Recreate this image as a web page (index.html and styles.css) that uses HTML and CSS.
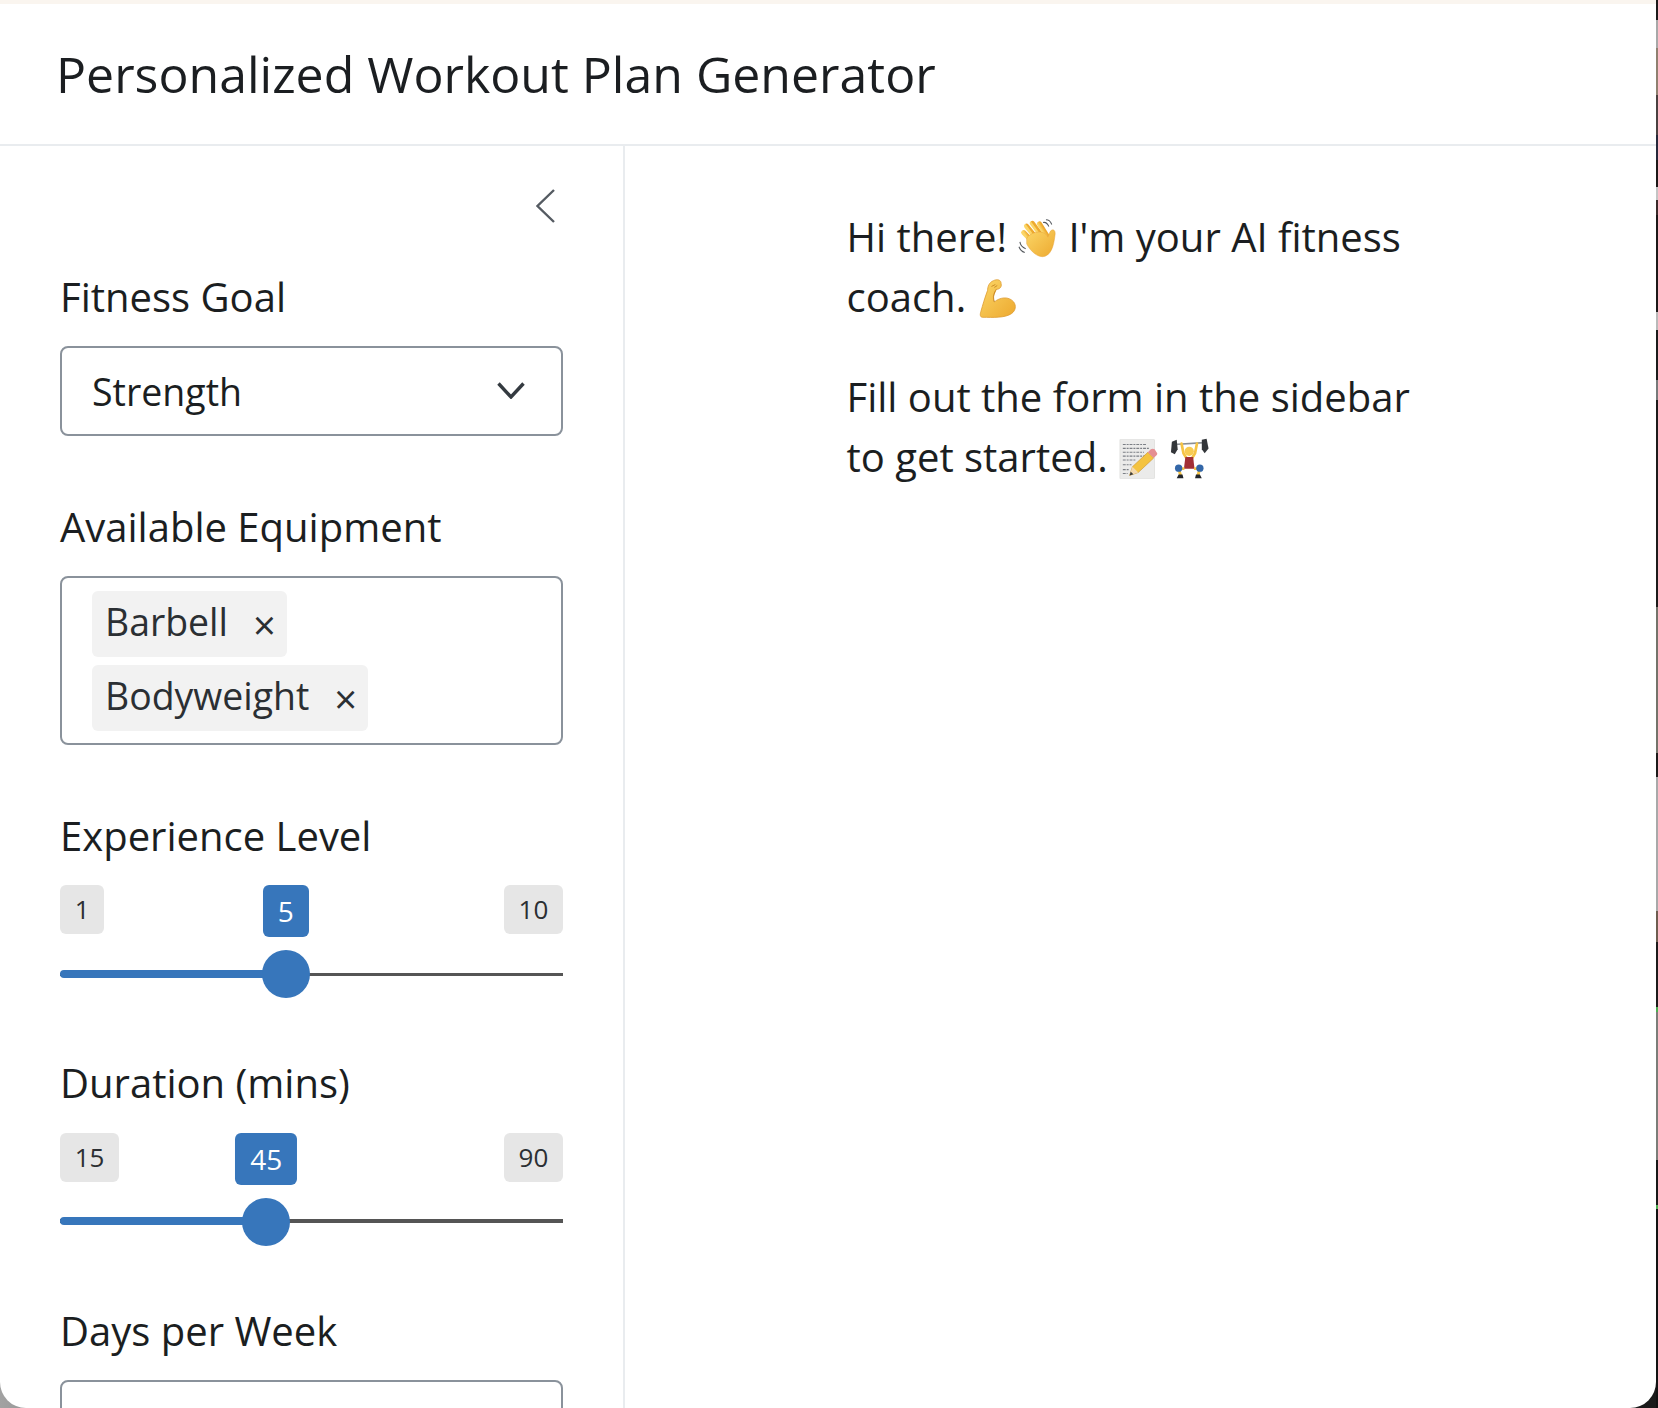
FILE: index.html
```html
<!DOCTYPE html>
<html>
<head>
    <title>Personalized Workout Plan Generator</title>
    <link rel="stylesheet" href="styles.css">
</head>
<body>
    <div class="window">
        <header class="page-header">Personalized Workout Plan Generator</header>
        <div class="layout">
            <aside class="sidebar">
                <button class="collapse-btn" aria-label="Collapse sidebar">
                    <svg width="19" height="34" viewBox="0 0 19 34"><path d="M18 1 L1.5 17 L18 33" fill="none" stroke="#555b62" stroke-width="2.4"/></svg>
                </button>

                <div class="form-group">
                    <label class="form-label">Fitness Goal</label>
                    <div class="select-box">
                        <span>Strength</span>
                        <svg class="select-arrow" width="28" height="17" viewBox="0 0 28 17"><path d="M1.5 1.5 L14 15 L26.5 1.5" fill="none" stroke="#343a40" stroke-width="3.4"/></svg>
                    </div>
                </div>

                <div class="form-group">
                    <label class="form-label">Available Equipment</label>
                    <div class="multi-box">
                        <div class="tag">Barbell<span class="tag-remove">×</span></div>
                        <div class="tag">Bodyweight<span class="tag-remove">×</span></div>
                    </div>
                </div>

                <div class="form-group">
                    <label class="form-label">Experience Level</label>
                    <div class="slider">
                        <div class="slider-ends"><span class="end-badge">1</span><span class="end-badge">10</span></div>
                        <span class="value-badge" style="left: 44.9%">5</span>
                        <div class="track track-thin"><div class="track-fill" style="width: 44.9%"></div></div>
                        <div class="thumb" style="left: 44.9%"></div>
                    </div>
                </div>

                <div class="form-group">
                    <label class="form-label">Duration (mins)</label>
                    <div class="slider slider-low">
                        <div class="slider-ends"><span class="end-badge">15</span><span class="end-badge">90</span></div>
                        <span class="value-badge" style="left: 41%">45</span>
                        <div class="track"><div class="track-fill" style="width: 41%"></div></div>
                        <div class="thumb" style="left: 41%"></div>
                    </div>
                </div>

                <div class="form-group">
                    <label class="form-label">Days per Week</label>
                    <div class="number-box"></div>
                </div>
            </aside>

            <main class="content">
                <div class="intro">
                    <p>Hi there!
                        <!-- waving hand -->
                        <svg class="emoji" viewBox="0 0 42 42">
                            <defs>
                                <linearGradient id="skin" x1="0" y1="0" x2="1" y2="1">
                                    <stop offset="0" stop-color="#fbd667"/>
                                    <stop offset="1" stop-color="#eda92f"/>
                                </linearGradient>
                            </defs>
                            <g stroke="url(#skin)" stroke-width="5.2" stroke-linecap="round" fill="none" transform="rotate(-38 22 22)">
                                <path d="M14 6 L15.5 21"/>
                                <path d="M20.5 2.5 L21 20"/>
                                <path d="M27 4 L26.5 21"/>
                                <path d="M32.5 9 L31 23"/>
                            </g>
                            <path d="M9 20 C13 14 27 10 31 19 L33 14 C35 10 39 11 38.5 16 C37.5 24 36 36 28 39 C21 41 13 34 9 26 Z" fill="url(#skin)" stroke="#e8a43a" stroke-width=".5"/>
                            <path d="M26 4 C29 3 31 6 32 8 M29 1 C32 1 34 3 35 6" fill="none" stroke="#55595e" stroke-width="1.1"/>
                            <path d="M2 24 C2.5 28 5 30 8 31 M1 29 C2 32 4 34 7 35" fill="none" stroke="#55595e" stroke-width="1.1"/>
                        </svg>
                        I'm your AI fitness coach.
                        <!-- flexed biceps -->
                        <svg class="emoji" viewBox="0 0 42 42">
                            <path d="M6 40 C3 40 3 37 4 34 C6 27 8 20 11 12 C11 9 12 4 17 2 C21 0 25 1 25 5 C26 9 23 11 20 11 L17 18 C17 22 17 23 18 24 C24 19 33 18 38 24 C41 28 40 33 36 36 C29 41 16 40 6 40 Z" fill="url(#skin)" stroke="#dd9a2e" stroke-width=".8"/>
                            <path d="M15 8 L19 6 M18 9 L21 7 M18 24 C16 18 18 14 20 11" fill="none" stroke="#c98a25" stroke-width="1"/>
                        </svg>
                    </p>
                    <p>Fill out the form in the sidebar to get started.
                        <!-- memo -->
                        <svg class="emoji" viewBox="0 0 42 42">
                            <rect x="2" y="1" width="36" height="40" fill="#ebebea" stroke="#d8d8d6" stroke-width=".6"/>
                            <path d="M5 6 H30 M5 10 H33 M5 14 H27 M5 18 H31 M5 22 H19 M5 27 H14 M5 32 H11 M5 36 H10" stroke="#7b7f85" stroke-width="1.1" stroke-dasharray="3 1 2 1"/>
                            <path d="M12 38 L15 29 L31 14 L37 20 L21 35 Z" fill="#f4c33f" stroke="#c7902a" stroke-width=".6"/>
                            <path d="M31 14 L34 11 C35 10 37 10 38 11 L40 14 C41 15 41 16 40 17 L37 20 Z" fill="#e58f93"/>
                            <path d="M12 38 L15 29 L21 35 Z" fill="#f3d9ae"/>
                            <path d="M12 38 L13.2 34.2 L16 36.8 Z" fill="#3a3a3a"/>
                        </svg>
                        <!-- person lifting weights -->
                        <svg class="emoji" viewBox="0 0 42 42">
                            <path d="M5 6 L37 4" stroke="#8b8f94" stroke-width="1.6"/>
                            <path d="M3 3 L8 1 L9 11 L6 16 L2 14 Z" fill="#33363a"/>
                            <path d="M34 1 L39 0 L41 10 L37 15 L34 11 Z" fill="#33363a"/>
                            <path d="M13 5 L15 15 L18 20 M29 5 L27 15 L24 20" fill="none" stroke="#f6c445" stroke-width="2.8" stroke-linecap="round"/>
                            <circle cx="21" cy="13" r="4.8" fill="#f8cc53"/>
                            <path d="M17 19 H25 L26.5 31 H15.5 Z" fill="#a22f35"/>
                            <path d="M16 31 H10 L12 38 M26 31 H32 L30 38" fill="none" stroke="#f6c445" stroke-width="3"/>
                            <circle cx="10" cy="30.5" r="3.8" fill="#3367a8"/>
                            <circle cx="32" cy="30.5" r="3.8" fill="#3367a8"/>
                            <path d="M8 41 L15 41 L14 37 L10 37 Z M27 41 L34 41 L32 37 L28 37 Z" fill="#23262a"/>
                        </svg>
                    </p>
                </div>
            </main>
        </div>
    </div>
</body>
</html>
```

FILE: styles.css
```css
html, body {
    height: 100%;
    margin: 0;
    overflow: hidden;
}
body {
    background:
        linear-gradient(to bottom, #1c1a1a 0 20px, #a8a8a8 20px 48px, #8f8070 48px 95px, #4a4040 95px 135px, #26283a 135px 160px, #1c1818 160px 187px, #c4c4c4 187px 200px, #3a2a2a 200px 215px, #1c1818 215px 312px, #b9b9b9 312px 330px, #1b1b1b 330px 380px, #77797a 380px 400px, #1c1a1a 400px 607px, #74736a 607px 753px, #1c1a1a 753px 777px, #a9a9a9 777px 911px, #6e5d50 911px 942px, #1c1a1a 942px 1007px, #4caf50 1007px 1012px, #7b7d78 1012px 1160px, #181818 1160px 1205px, #4caf50 1205px 1209px, #121212 1209px 1408px) right top / 2px 100% no-repeat,
        linear-gradient(to right, #a2a2a2, #2a2a2a 20%, #1a1a1a);
    font-family: "Open Sans", sans-serif;
    color: #1b1e21;
}
/* Page window */
.window {
    width: calc(100% - 2px);
    height: 100%;
    box-sizing: border-box;
    border-top: 4px solid #faf5ef;
    border-radius: 0 0 26px 26px;
    background-color: white;
    overflow: hidden;
}
.page-header {
    height: 140px;
    padding-left: 56px;
    border-bottom: 2px solid #e9ecef;
    font-size: 50px;
    line-height: 140px;
    white-space: nowrap;
}
.layout {
    display: flex;
}
/* Sidebar */
.sidebar {
    width: 625px;
    flex-shrink: 0;
    box-sizing: border-box;
    padding: 43px 60px 0 60px;
    border-right: 2px solid #e9ecef;
    display: flex;
    flex-direction: column;
}
.collapse-btn {
    align-self: flex-end;
    width: 28px;
    height: 34px;
    margin: 0 4px 44px 0;
    padding: 0;
    border: 0;
    background: none;
}
.form-group {
    margin-bottom: 61.5px;
}
.form-label {
    display: block;
    margin-bottom: 18.5px;
    font-size: 40px;
    line-height: 60px;
}
/* Inputs */
.select-box {
    height: 90px;
    box-sizing: border-box;
    padding: 2px 8px 0 30px;
    border: 2px solid #8a929b;
    border-radius: 8px;
    display: flex;
    align-items: center;
    justify-content: space-between;
    font-size: 37.5px;
}
.select-arrow {
    margin: 0 28px 2px 0;
}
.multi-box {
    height: 169px;
    box-sizing: border-box;
    padding: 13.5px 30px;
    border: 2px solid #8a929b;
    border-radius: 8px;
    display: flex;
    flex-direction: column;
    align-items: flex-start;
    gap: 8px;
}
.tag {
    height: 66px;
    flex-shrink: 0;
    box-sizing: border-box;
    padding: 0 11px 5px 13px;
    border-radius: 6px;
    background-color: #f2f2f2;
    display: flex;
    align-items: center;
    font-size: 37.4px;
    color: #2b2f33;
}
.tag-remove {
    margin-left: 25px;
    font-size: 40px;
    position: relative;
    top: 3px;
}
.number-box {
    height: 88px;
    box-sizing: border-box;
    border: 2px solid #8a929b;
    border-radius: 8px;
}
/* Sliders */
.slider {
    position: relative;
    height: 106.5px;
}
.slider-low {
    margin-top: 20.5px;
}
.slider-ends {
    display: flex;
    justify-content: space-between;
}
.end-badge {
    height: 49px;
    padding: 0 14.7px;
    border-radius: 6px;
    background-color: #e6e6e6;
    font-size: 26px;
    line-height: 48px;
    color: #2b2f33;
}
.value-badge {
    position: absolute;
    top: 0;
    height: 52px;
    padding: 0 15px;
    border-radius: 6px;
    background-color: #3776bb;
    color: white;
    font-size: 28px;
    line-height: 52px;
    transform: translateX(-50%);
}
.track {
    position: absolute;
    left: 0;
    right: 0;
    top: 86px;
    height: 4px;
    background-color: #555;
}
.track-thin {
    top: 88px;
    height: 3px;
}
.track-fill {
    position: absolute;
    left: 0;
    top: 50%;
    height: 8px;
    margin-top: -4px;
    border-radius: 4px 0 0 4px;
    background-color: #3776bb;
}
.thumb {
    position: absolute;
    top: 65px;
    width: 48px;
    height: 48px;
    border-radius: 50%;
    background-color: #3776bb;
    transform: translateX(-50%);
}
/* Main content */
.content {
    flex: 1;
    padding: 60.5px 0 0 221.5px;
}
.intro {
    width: 585px;
    font-size: 40px;
    line-height: 60px;
}
.intro p {
    margin: 0 0 40px;
}
.emoji {
    width: 40.5px;
    height: 42px;
    vertical-align: -8px;
}
```
